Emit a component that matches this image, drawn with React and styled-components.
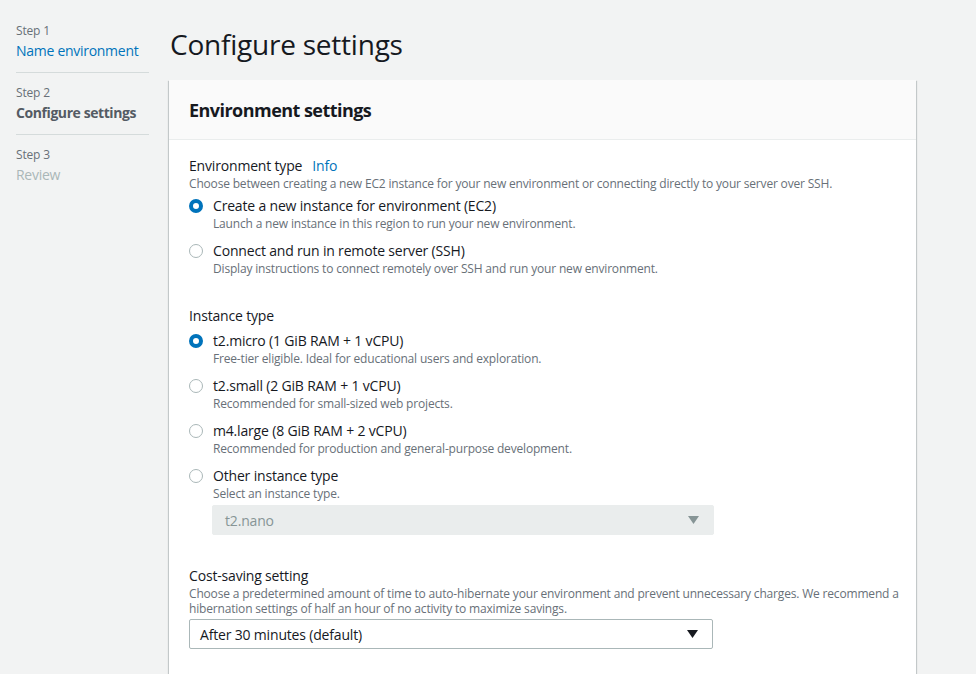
import React from 'react'
import styled, { createGlobalStyle } from 'styled-components'

const Global = createGlobalStyle`
	html, body {
		margin: 0;
		padding: 0;
		background: #f2f3f3;
		font-family: "Open Sans", "Noto Sans", sans-serif;
		color: #16191f;
		letter-spacing: -0.011em;
	}
`

const Page = styled.div`
	display: flex;
	align-items: flex-start;
	min-height: 674px;
	overflow: hidden;
`

const Sidebar = styled.nav`
	width: 133px;
	margin-left: 16px;
	padding-top: 22px;
	flex-shrink: 0;
`

const StepItem = styled.div`
	padding: 0 0 10px;
	margin-bottom: 11px;
	border-bottom: ${p => (p.$last ? 'none' : '1px solid #d5dbdb')};
`

const StepNum = styled.div`
	font-size: 12px;
	line-height: 18px;
	color: #687078;
`

const StepName = styled.div`
	font-size: 14px;
	line-height: 22px;
	letter-spacing: ${p => (p.$state === 'active' ? '-0.03em' : '-0.02em')};
	color: ${p => (p.$state === 'done' ? '#0073bb' : p.$state === 'active' ? '#545b64' : '#aab7b8')};
	font-weight: ${p => (p.$state === 'active' ? 700 : 400)};
`

const Main = styled.main`
	flex: 1;
	margin-left: 20px;
	margin-right: 60px;
`

const Title = styled.h1`
	margin: 26px 0 18px 1px;
	font-size: 28px;
	line-height: 36px;
	font-weight: 400;
	letter-spacing: -0.008em;
	color: #16191f;
`

const Card = styled.section`
	background: #fff;
	box-shadow: 0 1px 1px 0 rgba(0, 28, 36, 0.3), 1px 1px 1px 0 rgba(0, 28, 36, 0.15), -1px 1px 1px 0 rgba(0, 28, 36, 0.15);
`

const CardHeader = styled.header`
	background: #fafafa;
	border-bottom: 1px solid #eaeded;
	padding: 18px 20px 17px;
	font-size: 18px;
	line-height: 24px;
	font-weight: 700;
	letter-spacing: -0.03em;
`

const CardBody = styled.div`
	padding: 16px 12px 40px 20px;
`

const Field = styled.div`
	margin-bottom: ${p => p.$gap || 0}px;
`

const Label = styled.div`
	font-size: 14px;
	line-height: 20px;
	color: #16191f;
	display: flex;
	gap: 10px;
`

const Info = styled.span`
	color: #0073bb;
`

const Desc = styled.div`
	font-size: 12px;
	line-height: 15px;
	color: #687078;
`

const Options = styled.div`
	margin-top: 5px;
	display: flex;
	flex-direction: column;
	gap: 10px;
`

const Option = styled.label`
	display: flex;
	gap: 10px;
	align-items: flex-start;
`

const Radio = styled.span`
	box-sizing: border-box;
	width: 14px;
	height: 14px;
	margin-top: 3px;
	border-radius: 50%;
	flex-shrink: 0;
	border: ${p => (p.$checked ? '4px solid #0073bb' : '1px solid #aab7b8')};
	background: #fff;
`

const OptionText = styled.div`
	display: flex;
	flex-direction: column;
`

const OptionLabel = styled.div`
	font-size: 14px;
	line-height: 20px;
	color: #16191f;
`

const Select = styled.div`
	box-sizing: border-box;
	width: ${p => p.$width}px;
	height: 30px;
	margin: ${p => p.$margin || '0'};
	display: flex;
	align-items: center;
	justify-content: space-between;
	padding: 0 14px 0 ${p => (p.$disabled ? 12 : 10)}px;
	border-radius: 2px;
	font-size: 14px;
	background: ${p => (p.$disabled ? '#eaeded' : '#fff')};
	border: 1px solid ${p => (p.$disabled ? '#eaeded' : '#aab7b8')};
	color: ${p => (p.$disabled ? '#879596' : '#16191f')};
`

const Caret = ({ color }) => (
	<svg width="11" height="8" viewBox="0 0 11 8">
		<path d="M0 0 H11 L5.5 8 Z" fill={color} />
	</svg>
)

const envOptions = [
	{ label: 'Create a new instance for environment (EC2)', desc: 'Launch a new instance in this region to run your new environment.', checked: true },
	{ label: 'Connect and run in remote server (SSH)', desc: 'Display instructions to connect remotely over SSH and run your new environment.' },
]

const instanceOptions = [
	{ label: 't2.micro (1 GiB RAM + 1 vCPU)', desc: 'Free-tier eligible. Ideal for educational users and exploration.', checked: true },
	{ label: 't2.small (2 GiB RAM + 1 vCPU)', desc: 'Recommended for small-sized web projects.' },
	{ label: 'm4.large (8 GiB RAM + 2 vCPU)', desc: 'Recommended for production and general-purpose development.' },
	{ label: 'Other instance type', desc: 'Select an instance type.' },
]

const steps = [
	{ num: 'Step 1', name: 'Name environment', state: 'done' },
	{ num: 'Step 2', name: 'Configure settings', state: 'active' },
	{ num: 'Step 3', name: 'Review', state: 'todo' },
]

function RadioGroup({ items }) {
	return (
		<Options>
			{items.map(item => (
				<Option key={item.label}>
					<Radio $checked={item.checked} />
					<OptionText>
						<OptionLabel>{item.label}</OptionLabel>
						<Desc>{item.desc}</Desc>
					</OptionText>
				</Option>
			))}
		</Options>
	)
}

export default function App() {
	return (
		<>
			<Global />
			<Page>
				<Sidebar>
					{steps.map((s, i) => (
						<StepItem key={s.num} $last={i === steps.length - 1}>
							<StepNum>{s.num}</StepNum>
							<StepName $state={s.state}>{s.name}</StepName>
						</StepItem>
					))}
				</Sidebar>
				<Main>
					<Title>Configure settings</Title>
					<Card>
						<CardHeader>Environment settings</CardHeader>
						<CardBody>
							<Field $gap={30}>
								<Label>Environment type <Info>Info</Info></Label>
								<Desc>Choose between creating a new EC2 instance for your new environment or connecting directly to your server over SSH.</Desc>
								<RadioGroup items={envOptions} />
							</Field>
							<Field $gap={31}>
								<Label>Instance type</Label>
								<RadioGroup items={instanceOptions} />
								<Select $disabled $width={502} $margin="4px 0 0 23px">
									t2.nano
									<Caret color="#879596" />
								</Select>
							</Field>
							<Field>
								<Label>Cost-saving setting</Label>
								<Desc>Choose a predetermined amount of time to auto-hibernate your environment and prevent unnecessary charges. We recommend a hibernation settings of half an hour of no activity to maximize savings.</Desc>
								<Select $width={524} $margin="3px 0 0">
									After 30 minutes (default)
									<Caret color="#16191f" />
								</Select>
							</Field>
						</CardBody>
					</Card>
				</Main>
			</Page>
		</>
	)
}
